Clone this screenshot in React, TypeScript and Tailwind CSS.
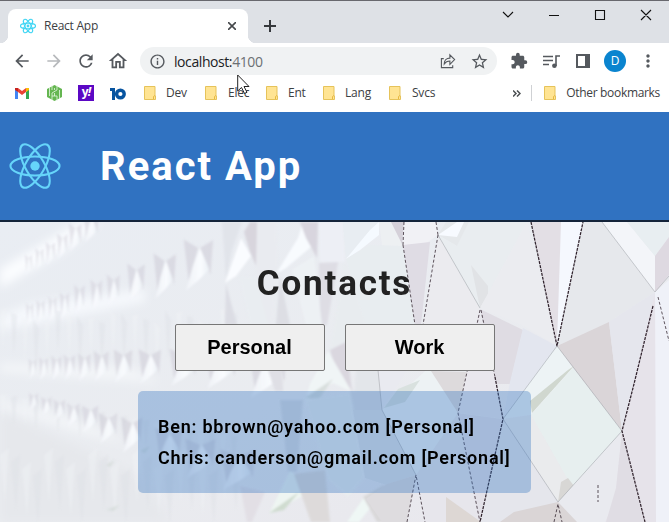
import React from "react";
import { MdArrowBack, MdArrowForward, MdExtension, MdRefresh, MdOutlineHome, MdInfoOutline, MdStarBorder, MdMoreVert } from "react-icons/md";

const Atom = ({ size, color, width = 22 }: { size: number; color: string; width?: number }) => (
  <svg className="shrink-0" width={size} height={size} viewBox="-250 -250 500 500" fill="none" stroke={color} strokeWidth={width}>
    <circle r="45" fill={color} stroke="none" />
    {[0, 60, 120].map((a) => <ellipse key={a} rx="236" ry="91" transform={`rotate(${a})`} />)}
  </svg>
);

const Folder = () => (
  <svg width="12" height="14" viewBox="0 0 12 14" className="shrink-0">
    <path d="M.5.5h10.5v9.5h.5v3.5H.5z" fill="#ffe493" stroke="#e6c35a" />
    <path d="M9.5 13v-2.5l1.5-1" fill="none" stroke="#e8b83f" />
  </svg>
);

type Facet = [string, string];

const distantFacets: Facet[] = [
  ["222,222 242,222 232,250 226,278", "#e1e4ea"],
  ["241,238 225,283 236,276 251,256", "#fafcff"],
  ["244,232 250,222 257,222 257,268 250,252", "#d8d5dd"],
  ["257,222 276,222 278,270 272,325 262,325 256,270", "#e9ebf0"],
  ["303,222 298,238 276,274 286,268 311,247 316,240", "#f8fbfe"],
  ["300,222 318,222 317,258 306,238", "#d8d5de"],
  ["319,222 343,222 345,262 320,262", "#edeff5"],
  ["319,263 338,262 327,325 320,325", "#dedde4"],
  ["226,284 237,325 225,325", "#dcdde4"],
  ["239,277 255,276 268,325 250,325", "#e9edf1"],
  ["280,276 290,325 276,325", "#dddee4"],
  ["292,270 314,256 322,325 306,325", "#edf1f4"],
  ["345,262 366,320 360,350 330,350", "#e8ecef"],
  ["330,350 346,342 352,391 340,385", "#dad7df"],
  ["328,351 310,384 305,402 333,383 352,392", "#f0f5f6"],
  ["305,398 333,379 319,399", "#d8dedd"],
  ["268,370 282,370 283,391 275,391", "#dfdfe5"],
  ["358,345 379,325 383,410 353,410", "#e3e6ea"],
  ["350,391 382,391 382,450 365,470", "#dcdee3"],
  ["280,400 303,400 297,472 288,472", "#d9dce2"],
  ["305,400 350,393 365,477 348,497 328,480", "#e9edef"],
  ["290,471 269,514 303,496 312,522 328,522 305,480", "#eef5f2"],
  ["269,513 299,492 284,510", "#cfdbcf"],
  ["294,474 325,470 330,522 311,522", "#dddada"],
  ["365,496 347,522 359,522 371,507 377,522 387,522 375,500", "#eff7f5"],
  ["363,497 384,485 395,522 377,522", "#d9d8d9"],
  ["240,486 265,492 252,522 247,522", "#e2dfe5"],
];

const facets: Facet[] = [
  ["343,222 379,222 366,235 346,258", "#e8edf2"],
  ["346,259 370,230 379,222 379,235 360,250", "#f5faff"],
  ["346,259 370,245 403,246 415,325 366,325", "#e8edf0"],
  ["379,222 392,222 402,243 401,246 382,245", "#edf0f2"],
  ["391,222 404,222 402,244", "#d5d1d9"],
  ["404,222 436,222 438,235 425,244 403,245", "#f1f1f5"],
  ["403,245 430,242 421,325 415,325", "#dfdce4"],
  ["438,235 480,308 478,325 423,325", "#ebebef"],
  ["438,235 446,222 469,222 457,246", "#e5e8eb"],
  ["438,235 457,222 464,222 457,237", "#f7faff"],
  ["438,235 457,246 469,222 527,222 488,295 480,308", "#e9edf0"],
  ["471,265 488,286 488,295 480,308", "#e1e3e6"],
  ["527,222 557,346 522,325 480,308", "#ebecf0"],
  ["531,222 562,222 557,346", "#e3dfe5"],
  ["561,222 583,222 557,346", "#f5f8fe"],
  ["583,222 602,222 655,292 608,323 557,346", "#e6e8ec"],
  ["602,222 627,222 655,256 655,292", "#f3f5f9"],
  ["627,222 669,222 669,237 655,256", "#e8eef1"],
  ["655,256 669,237 669,275 655,292", "#ded9e1"],
  ["480,309 523,330 510,384 495,384", "#dfdce3"],
  ["523,328 557,346 503,419 510,382", "#e3e6ef"],
  ["557,346 609,322 622,431", "#dad5d8"],
  ["609,322 655,292 654,304 622,431", "#e5e6ed"],
  ["655,292 669,340 669,522 645,522 622,431", "#e6e3ea"],
  ["655,292 669,280 669,522 656,522", "#eff1f8"],
  ["557,346 573,368 531,415 503,419", "#edf3f5"],
  ["568,370 574,366 532,413 530,401", "#d0d7cf"],
  ["573,368 622,431 572,487 531,415", "#e7efef"],
  ["531,415 572,487 558,502 503,419", "#eaebed"],
  ["561,482 568,478 574,486 558,502", "#d8d7d5"],
  ["503,419 558,502 554,522 480,522", "#e5e6ec"],
  ["558,502 622,431 615,500 605,522 562,522", "#e9eaef"],
  ["622,431 645,522 606,522 616,488", "#e0dde4"],
  ["500,522 514,512 558,502 577,522", "#dad5d6"],
  ["458,413 503,419 479,522", "#e3e1e8"],
  ["378,370 407,370 382,410", "#e9eaf0"],
  ["382,410 432,365 458,413 438,450 416,475", "#edf2f4"],
  ["384,408 398,389 420,380 405,402", "#d9e1df"],
  ["353,410 382,410 416,475 386,485 365,478", "#dfe2e7"],
  ["416,475 458,413 479,522 425,522", "#e7e6ec"],
  ["366,499 387,484 416,475 407,522 382,522", "#dedcdf"],
  ["431,371 467,372 458,413", "#dddadc"],
  ["479,310 467,372 458,413 503,419 495,377", "#e9e7ed"],
  ["446,497 481,522 446,522", "#ddd7d4"],
];

const seams = [
  "438,235 480,308", "602,222 655,292 669,276", "557,346 503,419 558,502 622,431 557,346",
  "378,370 382,410 416,475",
];
const strongCracks = ["531,222 557,346 583,222", "653,306 634,384 622,431 645,522", "495,377 503,419 480,522"];
const fineCracks = [
  "658,297 669,341", "480,310 467,372 458,413 480,522", "481,310 495,377",
  "403,245 415,325", "404,222 403,245", "438,235 423,325", "436,222 438,235",
  "554,522 558,504 562,522", "407,522 416,475 425,522", "598,485 598,502",
];
const spikes: number[][] = [
  [200, 248, 25, 43], [166, 261, 19, 38], [137, 270, 15, 32], [114, 280, 11, 27], [97, 285, 10, 27], [80, 290, 9, 26],
  [65, 297, 8, 24], [53, 301, 7, 22], [41, 304, 7, 21], [30, 307, 6, 20],
  [92, 218, 13, 25], [76, 228, 11, 24], [63, 238, 9, 22], [51, 246, 8, 20], [40, 252, 7, 19], [29, 258, 6, 18],
  [151, 355, 19, 29], [124, 355, 16, 28], [102, 356, 13, 26], [85, 358, 11, 24], [70, 359, 10, 22],
  [57, 360, 9, 21], [44, 361, 8, 20], [33, 362, 7, 18],
  [185, 355, 24, 31], [223, 353, 28, 36], [270, 354, 34, 44],
  [133, 423, 18, 30], [109, 418, 16, 26], [91, 410, 14, 23], [74, 407, 11, 20], [60, 403, 10, 18], [47, 400, 9, 16], [34, 396, 8, 15],
  [202, 445, 26, 33], [240, 456, 30, 34], [170, 434, 23, 30],
];

const Wall = () => (
  <svg className="absolute inset-0 h-full w-full" viewBox="0 222 669 300" preserveAspectRatio="none">
    <defs>
      <linearGradient id="wall" x1="0" y1="0" x2="1" y2="1"><stop stopColor="#e9edf3" /><stop offset=".5" stopColor="#eaecf0" /><stop offset="1" stopColor="#e8e6ec" /></linearGradient>
      <linearGradient id="shine" x1="0" x2="1"><stop stopColor="#f4f6fb" stopOpacity=".6" /><stop offset=".65" stopColor="#f9fbfe" /><stop offset="1" stopColor="#eaeff4" /></linearGradient>
      <filter id="soft"><feGaussianBlur stdDeviation="1.1" /></filter>
      <filter id="edge"><feGaussianBlur stdDeviation=".8" /></filter>
      <filter id="haze"><feGaussianBlur stdDeviation="5" /></filter>
    </defs>
    <path fill="url(#wall)" d="M0 222h669v300H0z" />
    <g filter="url(#haze)">
      <path d="M0 288 65 250 100 222 80 222 0 269" fill="#fbfdff" />
      <path d="M0 330 75 316 145 302 145 289 30 304 0 316" fill="#f5f8fc" />
      <path d="M0 372 80 378 160 383 130 367 0 363M0 400 80 421 130 445 70 430 0 407" fill="#f3f5f8" />
      <path d="M0 412 140 475 170 522H0" fill="#e6e8ec" />
    </g>
    <g filter="url(#soft)">
      {Array.from({ length: 22 }, (_, i) => (
        <path key={i} d={`M${i * 11} ${310 + (i % 5) * 3}l3 ${38 + (i % 4) * 4}l3-40M${i * 11} ${395 + i * 2}l3 28 3-29M${i * 11} ${455 + (i % 4) * 7}l5 48 4-55`} fill={i % 2 ? "#dcdfe4" : "#f2f4f6"} opacity=".38" />
      ))}
      {spikes.map(([x, y, w, h]) => (
        <g key={`${x}-${y}`} opacity={0.6 + Math.min(w, 20) / 50}>
          <path d={`M${x - w * 0.65} ${y - h * 0.2}L${x - w * 0.08} ${y}L${x - w * 0.45} ${y + h * 0.78}zM${x} ${y}L${x + w * 0.52} ${y - h * 0.18}L${x + w * 0.42} ${y + h * 0.62}z`} fill="#d1cfd8" opacity=".6" />
          <path d={`M${x} ${y}L${x + w * 0.37} ${y + h * 0.5}L${x - w * 0.08} ${y + h * 0.76}L${x - w * 0.57} ${y + h}L${x - w * 0.28} ${y + h * 0.42}z`} fill="url(#shine)" />
        </g>
      ))}
      <path d="m106 510 13-5-5 6m-8-46 9-5-5 7m30-16 10-5-5 7" fill="#cdd7d1" opacity=".55" />
    </g>
    <g filter="url(#edge)">{distantFacets.map(([points, fill]) => <polygon key={points} points={points} fill={fill} />)}</g>
    {facets.map(([points, fill]) => <polygon key={points} points={points} fill={fill} />)}
    <g fill="none" stroke="#777c82" strokeWidth=".5" opacity=".7">{seams.map((p) => <polyline key={p} points={p} />)}</g>
    <g fill="none" stroke="#30232d" strokeWidth=".9" strokeDasharray="3 2" opacity=".85">{fineCracks.map((p) => <polyline key={p} points={p} />)}</g>
    <g fill="none" stroke="#30232d" strokeWidth="1.25" strokeDasharray="3 1">{strongCracks.map((p) => <polyline key={p} points={p} />)}</g>
  </svg>
);

const bookmarks = [["Dev", "w-[61px]"], ["Elec", "w-[61px]"], ["Ent", "w-[57px]"], ["Lang", "w-[66px]"], ["Svcs", "w-[60px]"]];

const Browser = () => (
  <div className="relative h-28 bg-white font-['Open_Sans','Noto_Sans',sans-serif] text-[#3c4043]">
    <div className="flex h-[43px] border-t border-[#68686e] bg-[#dee1e6] pl-2 pt-2">
      <div className="relative flex h-[34px] w-60 items-center rounded-t-lg bg-white pl-3">
        <span className="absolute -left-2 bottom-0 size-2 bg-[radial-gradient(circle_at_0_0,transparent_8px,white_8.5px)]" />
        <span className="absolute -right-2 bottom-0 size-2 bg-[radial-gradient(circle_at_100%_0,transparent_8px,white_8.5px)]" />
        <Atom size={16} color="#43d6f4" width={34} />
        <span className="ml-2 text-[12px] tracking-[-0.25px]">React App</span>
        <svg className="ml-auto mr-3" width="8" height="8" viewBox="0 0 8 8" stroke="#45484b" strokeWidth="1.6"><path d="m0 0 8 8m0-8-8 8" /></svg>
      </div>
      <svg className="ml-4 mt-[11px]" width="12" height="12" viewBox="0 0 12 12" stroke="#35383c" strokeWidth="2"><path d="M6 0v12M0 6h12" /></svg>
      <svg className="ml-auto mr-[17px]" width="150" height="16" viewBox="0 0 150 16" fill="none" stroke="#111" strokeWidth="1.1"><path d="m1 3 5 5 5-5M47 6.5h10M93.5 1.5h9v9h-9zM139 1l10 10m0-10-10 10" /></svg>
    </div>
    <div className="flex h-[37px] items-center pb-px pl-[12px] text-[#55595e]">
      <MdArrowBack size={20} />
      <MdArrowForward className="ml-3 text-[#b7b9bc]" size={20} />
      <MdRefresh className="ml-3" size={20} />
      <MdOutlineHome className="ml-[11px]" size={22} />
      <div className="ml-[11px] flex h-7 w-[357px] items-center rounded-full bg-[#f0f2f3] pl-[9px] text-[14px] tracking-[-0.42px]">
        <MdInfoOutline size={17} />
        <span className="ml-2 text-[#202124]">localhost:<span className="text-[#6c7074]">4100</span></span>
        <svg className="ml-auto" width="16" height="16" viewBox="0 0 17 17" fill="none" stroke="currentColor" strokeWidth="1.2"><path d="M4 6H1.5v9.5h12V13M4.5 11.5c0-4 2.5-6 6-6V2l5 5-5 5V8.5c-3 0-4.5.8-6 3z" /></svg>
        <MdStarBorder className="ml-[14px] mr-2" size={19} />
      </div>
      <MdExtension className="ml-[13px]" size={18} />
      <svg className="ml-[15px]" width="17" height="15" viewBox="0 0 17 15" fill="none" stroke="currentColor" strokeWidth="1.6"><path d="M0 2.5h10M0 6.5h10M0 10.5h6M13 12V2h4" /><circle cx="11.4" cy="11.8" r="2.3" fill="currentColor" stroke="none" /></svg>
      <svg className="ml-4" width="14" height="14" viewBox="0 0 14 14"><path d="M0 0h14v14H0zM2 2v10h7V2z" fillRule="evenodd" fill="currentColor" /></svg>
      <span className="ml-[14px] flex size-[22px] items-center justify-center rounded-full bg-[#0a84cf] text-[12px] text-white">D</span>
      <MdMoreVert className="ml-3" size={20} />
    </div>
    <div className="flex h-[26px] items-center pl-[15px] text-[12px] tracking-[-0.22px]">
      <svg width="14" height="12" viewBox="0 0 14 12"><path d="M0 1v11h3V5z" fill="#4285f4" /><path d="M11 5v7h3V1z" fill="#34a853" /><path d="m3 5 4 3 4-3V1L7 4 3 1z" fill="#ea4335" /><path d="m0 1 3 0v4L0 3z" fill="#c5221f" /><path d="M11 1h3v2l-3 2z" fill="#fbbc04" /></svg>
      <svg className="ml-[18px]" width="15" height="16" viewBox="0 0 15 16"><path d="M0 4 7.5 0 15 4v8l-7.5 4L0 12z" fill="#65b651" /><path d="M2.5 2v9m2.5 4V8l5-3V0M5 0v5m5 11v-5l-5 0m7.5 3V5M7.5 8v3m0-8v2" stroke="#e8f7e4" strokeWidth=".8" fill="none" /></svg>
      <span className="ml-4 flex size-4 items-center justify-center bg-[#5b08c4] pb-0.5 text-[12px] font-bold leading-none tracking-[-1px] text-white">y<i>!</i></span>
      <svg className="ml-4" width="16" height="13" viewBox="0 0 16 13"><path d="M0 1h5v12H2V4H0z" fill="#0754a0" /><circle cx="10.4" cy="7" r="3.8" fill="none" stroke="#0754a0" strokeWidth="3.4" /></svg>
      <div className="ml-[18px] flex">
        {bookmarks.map(([name, width]) => <div key={name} className={`flex items-center ${width}`}><Folder /><span className={name === "Lang" || name === "Ent" || name === "Dev" ? "ml-[10px]" : "ml-[11px]"}>{name}</span></div>)}
      </div>
      <svg className="ml-auto" width="8" height="7" viewBox="0 0 8 7" fill="none" stroke="#4b4f52" strokeWidth="1.5"><path d="m0 .5 3 3-3 3m4-6 3 3-3 3" /></svg>
      <span className="ml-[10px] mr-3 h-4 w-px bg-[#cfd1d4]" />
      <Folder /><span className="ml-[10px] mr-[9px] tracking-[-0.32px]">Other bookmarks</span>
    </div>
    <svg className="absolute left-[237px] top-[74px]" width="13" height="21" viewBox="0 0 13 21"><path d="M.7 1v16l3.8-3.5 3 6 2.5-1.2-3-5.8h5z" fill="white" stroke="#222" /></svg>
  </div>
);

export default function App() {
  return (
    <div className="flex h-[522px] w-[669px] flex-col overflow-hidden font-[Roboto,sans-serif]">
      <Browser />
      <header className="flex h-[110px] shrink-0 items-center border-b-2 border-[#14243a] bg-[#3072c1] pl-[9px] text-white">
        <Atom size={52} color="#66d5fa" width={20} />
        <h1 className="ml-[39px] pt-0.5 text-[40px] font-bold leading-none tracking-[2px]">React App</h1>
      </header>
      <main className="relative h-[300px] overflow-hidden">
        <Wall />
        <div className="relative flex flex-col items-center">
          <h2 className="mt-[43px] text-[35px] font-bold leading-[38px] tracking-[1.8px] text-[#222]">Contacts</h2>
          <div className="mt-[21px] flex gap-5 font-['Liberation_Sans',sans-serif] text-[20px] font-bold text-black">
            <button className="h-[47px] w-[150px] rounded-[2px] border border-[#767676] bg-[#efefef] pb-0.5">Personal</button>
            <button className="h-[47px] w-[150px] rounded-[2px] border border-[#767676] bg-[#efefef] pb-0.5">Work</button>
          </div>
          <ul className="mt-5 h-[102px] w-[393px] rounded-[5px] bg-[#3072c1]/35 px-5 pt-5 text-[18px] font-semibold leading-[31px] tracking-[0.78px] text-black">
            <li className="whitespace-nowrap">Ben: bbrown@yahoo.com [Personal]</li>
            <li className="whitespace-nowrap">Chris: canderson@gmail.com [Personal]</li>
          </ul>
        </div>
      </main>
    </div>
  );
}
